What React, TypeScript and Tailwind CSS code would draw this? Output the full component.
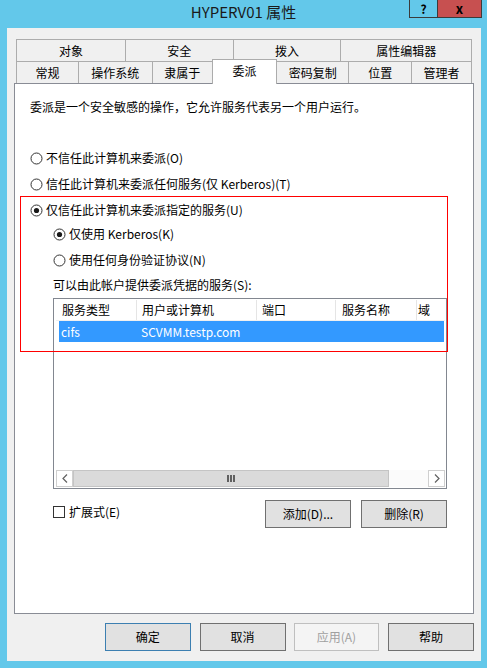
import React from "react";

const Radio: React.FC<{ checked?: boolean }> = ({ checked }) => (
  <svg width="13" height="13" viewBox="0 0 13 13" className="shrink-0">
    <circle cx="6.5" cy="6.5" r="5.5" fill="#fff" stroke="#333" strokeWidth="1" />
    {checked && <circle cx="6.5" cy="6.5" r="2.6" fill="#1a1a1a" />}
  </svg>
);

const Btn: React.FC<{ label: string; variant?: "default" | "disabled"; className?: string }> = ({
  label,
  variant,
  className = "",
}) => {
  let cls = "bg-[#e1e1e1] border-[#707070] text-black";
  if (variant === "default") cls = "bg-[#e1e1e1] border-[#3c7fb1] text-black";
  if (variant === "disabled") cls = "bg-[#f4f4f4] border-[#bfbfbf] text-[#a0a0a0]";
  return (
    <div
      className={`w-[86px] h-[28px] border flex items-center justify-center text-[12px] leading-[16px] ${cls} ${className}`}
    >
      {label}
    </div>
  );
};

export default function App() {
  return (
    <div className="w-[487px] h-[668px] bg-[#63c8ea] font-['Noto_Sans_CJK_SC',sans-serif] text-black overflow-hidden">
      {/* title bar */}
      <div className="h-[28px] flex">
        <div className="w-[78px]" />
        <div className="flex-1 text-center text-[15px] leading-[20px] pt-[2px] text-[#1a1a1a]">
          HYPERV01 属性
        </div>
        <div className="w-[78px] flex items-start">
          <div className="w-[28px] h-[18px] border-l border-b border-[#3b3b3b] flex items-center justify-center text-[12px] font-bold leading-none">
            ?
          </div>
          <div className="w-[45px] h-[18px] bg-[#c75050] border-l border-r border-b border-[#3b3b3b] flex items-center justify-center text-[13px] font-bold leading-none">
            x
          </div>
        </div>
      </div>

      {/* client */}
      <div className="ml-[7px] w-[474px] h-[633px] bg-[#f0f0f0] px-[7px] pt-[11px]">
        {/* tab rows */}
        <div className="px-[2px] text-[12px] leading-[16px]">
          <div className="flex h-[22px]">
            <div className="w-[109px] border-t border-l border-[#acacac] flex items-center justify-center">对象</div>
            <div className="w-[108px] border-t border-l border-[#acacac] flex items-center justify-center">安全</div>
            <div className="w-[108px] border-t border-l border-[#acacac] flex items-center justify-center">拨入</div>
            <div className="w-[132px] border-t border-l border-r border-[#acacac] flex items-center justify-center">属性编辑器</div>
          </div>
          <div className="flex h-[22px]">
            <div className="w-[62px] border-t border-l border-[#acacac] flex items-center justify-center">常规</div>
            <div className="w-[74px] border-t border-l border-[#acacac] flex items-center justify-center">操作系统</div>
            <div className="w-[60px] border-t border-l border-[#acacac] flex items-center justify-center">隶属于</div>
            <div className="w-[66px] h-[25px] -mt-[2px] relative z-10 bg-white border-t border-l border-r border-[#acacac] flex items-start justify-center pt-[3px]">
              委派
            </div>
            <div className="w-[71px] border-t border-[#acacac] flex items-center justify-center">密码复制</div>
            <div className="w-[63px] border-t border-l border-[#acacac] flex items-center justify-center">位置</div>
            <div className="w-[61px] border-t border-l border-r border-[#acacac] flex items-center justify-center">管理者</div>
          </div>
        </div>

        {/* tab page */}
        <div className="relative h-[531px] bg-white border border-[#898c95] text-[12px] leading-[16px]">
          <div className="pl-[15px] mt-[15px] h-[16px] flex items-center">
            委派是一个安全敏感的操作，它允许服务代表另一个用户运行。
          </div>

          <div className="pl-[15px] mt-[35px] h-[16px] flex items-center gap-[3px]">
            <Radio />
            <span>不信任此计算机来委派(O)</span>
          </div>
          <div className="pl-[15px] mt-[10px] h-[16px] flex items-center gap-[3px]">
            <Radio />
            <span>信任此计算机来委派任何服务(仅 Kerberos)(T)</span>
          </div>
          <div className="pl-[15px] mt-[10px] h-[16px] flex items-center gap-[3px]">
            <Radio checked />
            <span>仅信任此计算机来委派指定的服务(U)</span>
          </div>

          <div className="pl-[38px]">
            <div className="mt-[8px] h-[16px] flex items-center gap-[3px]">
              <Radio checked />
              <span>仅使用 Kerberos(K)</span>
            </div>
            <div className="mt-[10px] h-[16px] flex items-center gap-[3px]">
              <Radio />
              <span>使用任何身份验证协议(N)</span>
            </div>
            <div className="mt-[9px] h-[16px] flex items-center">可以由此帐户提供委派凭据的服务(S):</div>

            {/* list view */}
            <div className="mt-[5px] w-[394px] h-[191px] border border-[#828790] p-px flex flex-col">
              <div className="flex h-[21px] border-b border-[#f0f0f0] ml-px">
                <div className="w-[81px] border-r border-[#e5e5e5] pl-[6px] flex items-center">服务类型</div>
                <div className="w-[120px] border-r border-[#e5e5e5] pl-[5px] flex items-center">用户或计算机</div>
                <div className="w-[79px] border-r border-[#e5e5e5] pl-[5px] flex items-center">端口</div>
                <div className="w-[81px] border-r border-[#e5e5e5] pl-[6px] flex items-center">服务名称</div>
                <div className="flex-1 pl-[1px] flex items-center">域</div>
              </div>
              <div className="ml-[4px] mr-px h-[21px] bg-[#3399ff] text-white flex items-center">
                <div className="w-[82px] pl-[2px]">cifs</div>
                <div>SCVMM.testp.com</div>
              </div>
              <div className="flex-1" />
              {/* horizontal scrollbar */}
              <div className="h-[17px] flex bg-[#f0f0f0] ml-px">
                <div className="w-[17px] border border-[#cfcfcf] bg-white flex items-center justify-center">
                  <svg width="6" height="9" viewBox="0 0 6 9">
                    <polyline points="5,0.5 1,4.5 5,8.5" fill="none" stroke="#606060" strokeWidth="1.2" />
                  </svg>
                </div>
                <div className="w-[316px] bg-[#dadada] border border-[#c4c4c4] flex items-center justify-center">
                  <div className="flex gap-[1px]">
                    <div className="w-[2px] h-[7px] bg-[#606060]" />
                    <div className="w-[2px] h-[7px] bg-[#606060]" />
                    <div className="w-[2px] h-[7px] bg-[#606060]" />
                  </div>
                </div>
                <div className="flex-1 bg-[#fbfbfb]" />
                <div className="w-[17px] border border-[#cfcfcf] bg-white flex items-center justify-center">
                  <svg width="6" height="9" viewBox="0 0 6 9">
                    <polyline points="1,0.5 5,4.5 1,8.5" fill="none" stroke="#606060" strokeWidth="1.2" />
                  </svg>
                </div>
              </div>
            </div>

            <div className="mt-[11px] flex items-start w-[394px]">
              <div className="mt-[4px] flex items-center gap-[4px]">
                <div className="w-[12px] h-[12px] border border-[#333] bg-white" />
                <span>扩展式(E)</span>
              </div>
              <div className="ml-auto flex gap-[10px]">
                <Btn label="添加(D)..." />
                <Btn label="删除(R)" />
              </div>
            </div>
          </div>

          {/* red highlight annotation */}
          <div className="absolute left-[5px] top-[112px] w-[428px] h-[156px] border border-[#ff0000] pointer-events-none" />
        </div>

        {/* dialog buttons */}
        <div className="mt-[9px] flex">
          <Btn label="确定" variant="default" className="ml-[91px]" />
          <Btn label="取消" className="ml-[9px]" />
          <Btn label="应用(A)" variant="disabled" className="ml-[8px]" />
          <Btn label="帮助" className="ml-[9px]" />
        </div>
      </div>
    </div>
  );
}
